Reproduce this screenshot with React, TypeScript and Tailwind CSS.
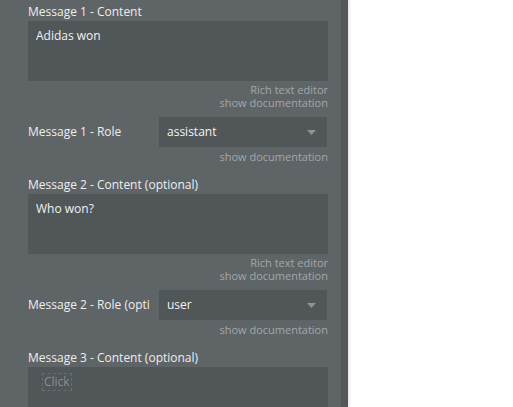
import React from "react";

const font = { fontFamily: '"Open Sans", "Noto Sans", sans-serif' };

function Doc({ rich }: { rich?: boolean }) {
  return (
    <div className="flex shrink-0 flex-col items-end text-[11px] leading-[13px] text-[#a3a7aa]">
      {rich && <span>Rich text editor</span>}
      <span>show documentation</span>
    </div>
  );
}

function Area({ children }: { children?: React.ReactNode }) {
  return (
    <div className="h-[60px] w-[300px] shrink-0 bg-[#515659] px-2 pt-[7px] text-[12px] leading-[16px] text-[#f2f2f2]">
      {children}
    </div>
  );
}

function Label({ children, className = "" }: { children: React.ReactNode; className?: string }) {
  return <div className={`shrink-0 text-[12px] leading-[18px] text-[#eeeeee] ${className}`}>{children}</div>;
}

function Role({ label, value }: { label: string; value: string }) {
  return (
    <div className="flex shrink-0 items-center">
      <div className="w-[122px] overflow-hidden whitespace-nowrap text-[12px] text-[#eeeeee]">{label}</div>
      <div className="ml-[9px] flex h-[30px] w-[168px] items-center justify-between bg-[#515659] pl-2 pr-[11px] text-[12px] text-[#f2f2f2]">
        <span>{value}</span>
        <svg width="9" height="5" viewBox="0 0 9 5"><path d="M0 0h9L4.5 5z" fill="#8e9295" /></svg>
      </div>
    </div>
  );
}

export default function App() {
  return (
    <div className="flex h-[407px] w-[513px] overflow-hidden bg-white" style={font}>
      <div className="flex h-full w-[341px] shrink-0 border-l-[8px] border-[#5f6467] bg-[#5f6467]">
        <div className="flex flex-col pl-5 pt-[3px]">
          <Label>Message 1 - Content</Label>
          <Area>Adidas won</Area>
          <div className="mt-[2px] shrink-0"><Doc rich /></div>
          <div className="mt-[8px] shrink-0"><Role label="Message 1 - Role" value="assistant" /></div>
          <div className="mt-[3px] shrink-0"><Doc /></div>
          <Label className="mt-[13px]">Message 2 - Content (optional)</Label>
          <Area>Who won?</Area>
          <div className="mt-[2px] shrink-0"><Doc rich /></div>
          <div className="mt-[8px] shrink-0"><Role label="Message 2 - Role (optional)" value="user" /></div>
          <div className="mt-[3px] shrink-0"><Doc /></div>
          <Label className="mt-[13px]">Message 3 - Content (optional)</Label>
          <div className="flex h-[60px] w-[300px] shrink-0 items-start bg-[#515659] pl-[14px] pt-[6px]">
            <span className="border border-dashed border-[#6a6e71] px-[1px] text-[12px] leading-[16px] text-[#8a8e91]">Click</span>
          </div>
        </div>
      </div>
      <div className="h-full w-[7px] shrink-0 bg-[#535759] shadow-[1px_0_3px_rgba(0,0,0,0.15)]" />
    </div>
  );
}
